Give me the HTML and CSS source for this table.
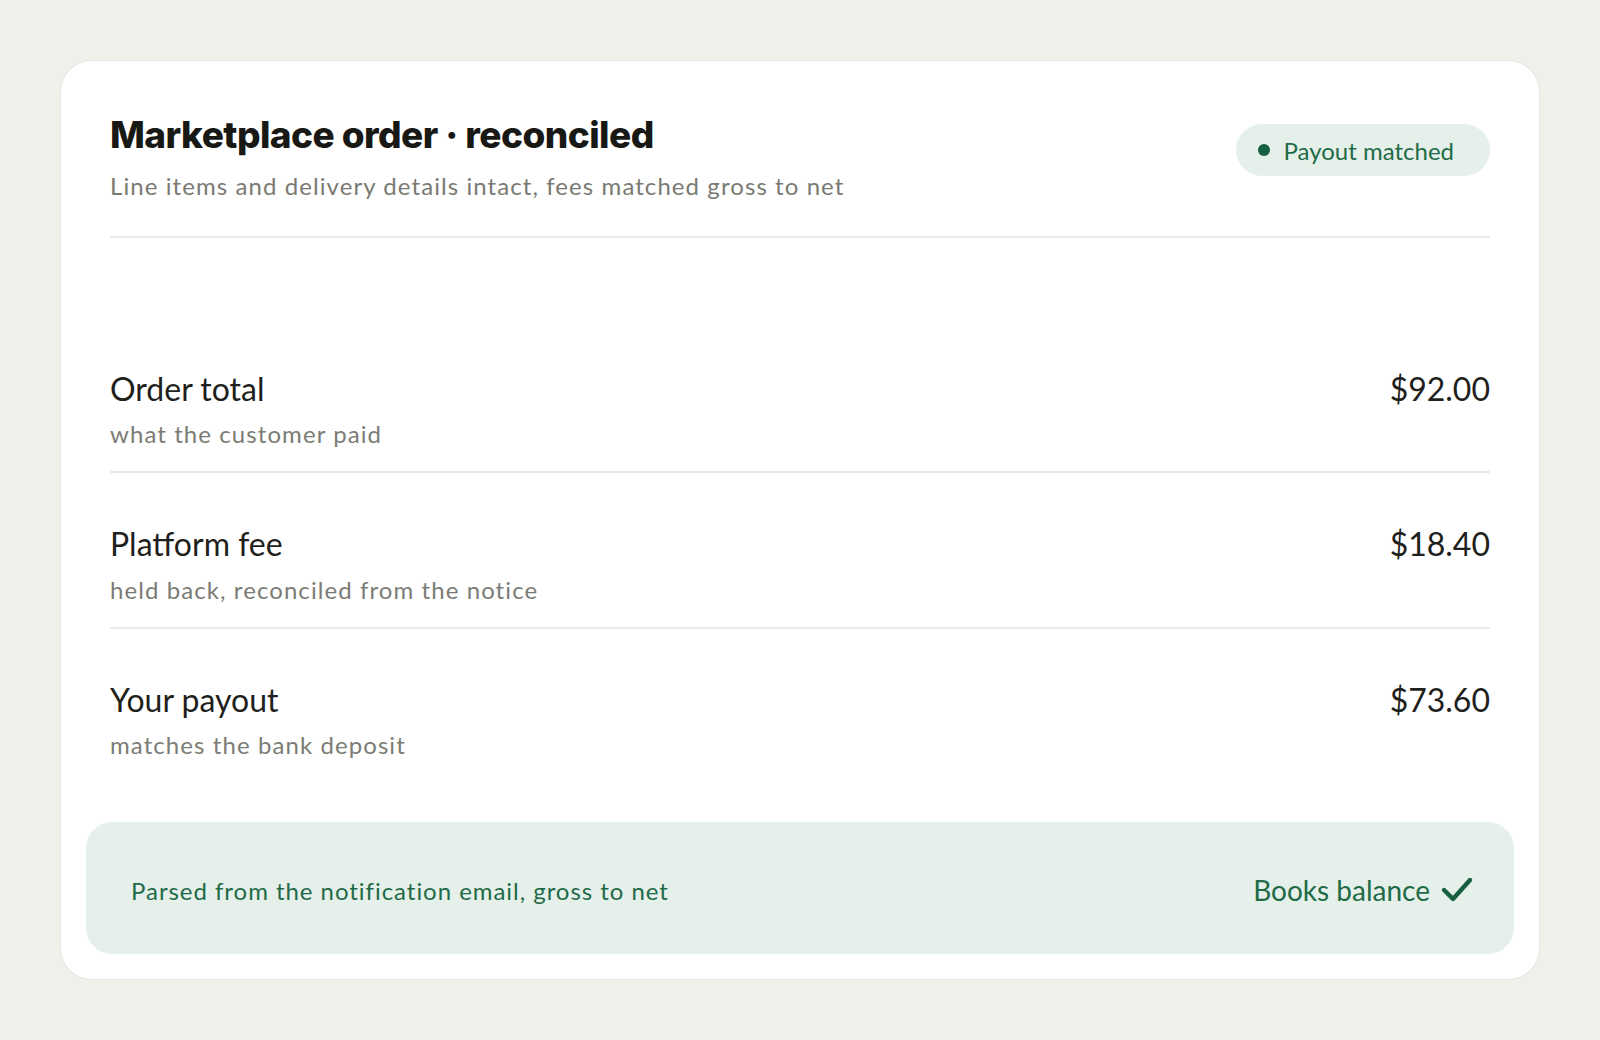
FILE: index.html
```html
<!DOCTYPE html>
<html lang="en">
<head>
<meta charset="utf-8">
<title>Marketplace order · reconciled</title>
<link rel="stylesheet" href="styles.css">
</head>
<body>
<main class="card">
  <header class="head">
    <div class="head-text">
      <h1 class="title">Marketplace order · reconciled</h1>
      <p class="subtitle">Line items and delivery details intact, fees matched gross to net</p>
    </div>
    <span class="badge"><span class="badge-dot"></span>Payout matched</span>
  </header>

  <section class="rows">
    <div class="row">
      <div class="row-text">
        <div class="row-title">Order total</div>
        <div class="row-sub">what the customer paid</div>
      </div>
      <div class="amount">$92.00</div>
    </div>
    <div class="row">
      <div class="row-text">
        <div class="row-title">Platform fee</div>
        <div class="row-sub">held back, reconciled from the notice</div>
      </div>
      <div class="amount">$18.40</div>
    </div>
    <div class="row">
      <div class="row-text">
        <div class="row-title">Your payout</div>
        <div class="row-sub">matches the bank deposit</div>
      </div>
      <div class="amount">$73.60</div>
    </div>
  </section>

  <footer class="foot">
    <span class="foot-note">Parsed from the notification email, gross to net</span>
    <span class="foot-status">Books balance
      <svg class="check" width="34" height="30" viewBox="0 0 34 30" aria-hidden="true">
        <polyline points="4,15 13,24 30,5" fill="none" stroke="currentColor" stroke-width="4.4" stroke-linecap="round" stroke-linejoin="round"/>
      </svg>
    </span>
  </footer>
</main>
</body>
</html>
```

FILE: styles.css
```css
* { box-sizing: border-box; }

html, body {
  margin: 0;
  padding: 0;
}

body {
  background: #f0f0ea;
  font-family: "Lato", "Noto Sans", sans-serif;
  color: #1f1f1c;
  padding: 60px;
}

.card {
  width: 1480px;
  height: 920px;
  background: #ffffff;
  border: 1px solid #e7e5de;
  border-radius: 32px;
  padding: 28px 25px 25px;
  display: flex;
  flex-direction: column;
}

.head {
  display: flex;
  justify-content: space-between;
  align-items: flex-start;
  margin: 0 24px;
  padding: 26px 0 35px;
  border-bottom: 2px solid #ebe9e3;
}

.title {
  margin: 0;
  font-family: "Inter", "Liberation Sans", sans-serif;
  font-weight: 800;
  font-size: 37px;
  line-height: 1.1;
  letter-spacing: -0.015em;
  color: #181815;
}

.subtitle {
  margin: 14px 0 0;
  font-size: 24px;
  line-height: 1.3;
  font-weight: 400;
  letter-spacing: 0.045em;
  color: #7a7a73;
}

.badge {
  margin-top: 9px;
  height: 52px;
  display: inline-flex;
  align-items: center;
  gap: 14px;
  padding: 0 36px 0 22px;
  border-radius: 26px;
  background: #e6f0ea;
  color: #1f6b47;
  font-size: 24px;
  font-weight: 400;
}

.badge-dot {
  width: 12px;
  height: 12px;
  border-radius: 50%;
  background: #17603f;
}

.rows {
  margin-top: 132px;
  padding: 0 24px;
}

.row {
  display: flex;
  justify-content: space-between;
  align-items: baseline;
  padding: 52px 0 22px;
  border-bottom: 2px solid #ebe9e3;
}

.row:first-child {
  padding-top: 0;
}

.row:last-child {
  border-bottom: none;
}

.row-title {
  font-size: 32px;
  line-height: 1.2;
  color: #1f1f1c;
}

.row-sub {
  margin-top: 10px;
  font-size: 24px;
  line-height: 1.3;
  letter-spacing: 0.045em;
  color: #7b7c75;
}

.amount {
  font-size: 32px;
  line-height: 1.2;
  color: #1f1f1c;
}

.foot {
  margin-top: auto;
  height: 132px;
  border-radius: 26px;
  background: #e6f0ea;
  display: flex;
  justify-content: space-between;
  align-items: center;
  padding: 4px 40px 0 45px;
  color: #1f6b47;
}

.foot-note {
  font-size: 24px;
  letter-spacing: 0.04em;
}

.foot-status {
  display: inline-flex;
  align-items: center;
  gap: 10px;
  font-size: 28px;
}

.check {
  display: block;
  color: #17603f;
}
```
